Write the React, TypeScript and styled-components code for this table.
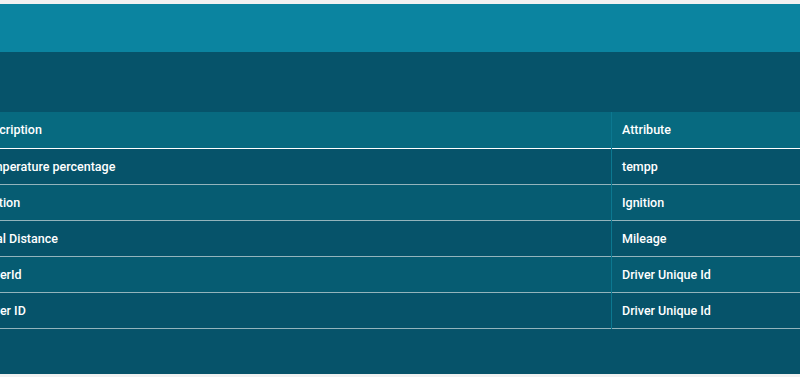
import React from "react";
import styled, { createGlobalStyle } from "styled-components";

const GlobalStyle = createGlobalStyle`
  html, body {
    margin: 0;
    padding: 0;
    background: #f1f1f1;
    font-family: Roboto, "Liberation Sans", sans-serif;
    overflow: hidden;
  }
`;

const Page = styled.div`
  padding: 4px 0;
`;

const TitleBar = styled.div`
  height: 48px;
  background: #0b84a0;
`;

const Body = styled.div`
  background: #06536a;
  padding: 60px 0 45px;
  overflow: hidden;
`;

const Table = styled.table`
  border-collapse: collapse;
  margin-left: -32px;
  width: calc(100% + 32px);
  table-layout: fixed;
  color: #ffffff;
  font-size: 12.5px;
  font-weight: 500;
`;

const HeadRow = styled.tr`
  background: #076a80;
  height: 36px;
  border-bottom: 1px solid #ffffff;
`;

const Row = styled.tr<{ $alt?: boolean }>`
  background: ${(p) => (p.$alt ? "#065c72" : "#06536a")};
  height: 36px;
  border-bottom: 1px solid #93b4bc;
`;

const Cell = styled.td<{ $first?: boolean }>`
  padding: 0 10px;
  text-align: left;
  white-space: nowrap;
  width: ${(p) => (p.$first ? "623px" : "auto")};
  border-right: ${(p) => (p.$first ? "1px solid #0c7890" : "none")};
`;

const HeadCell = styled(Cell).attrs({ as: "th" })`
  font-weight: 500;
`;

const rows = [
  { description: "Temperature percentage", attribute: "tempp" },
  { description: "Ignition", attribute: "Ignition" },
  { description: "Total Distance", attribute: "Mileage" },
  { description: "DriverId", attribute: "Driver Unique Id" },
  { description: "Driver ID", attribute: "Driver Unique Id" },
];

export default function App() {
  return (
    <Page>
      <GlobalStyle />
      <TitleBar />
      <Body>
        <Table>
          <thead>
            <HeadRow>
              <HeadCell $first>Description</HeadCell>
              <HeadCell>Attribute</HeadCell>
            </HeadRow>
          </thead>
          <tbody>
            {rows.map((r, i) => (
              <Row key={i} $alt={i % 2 === 1}>
                <Cell $first>{r.description}</Cell>
                <Cell>{r.attribute}</Cell>
              </Row>
            ))}
          </tbody>
        </Table>
      </Body>
    </Page>
  );
}
